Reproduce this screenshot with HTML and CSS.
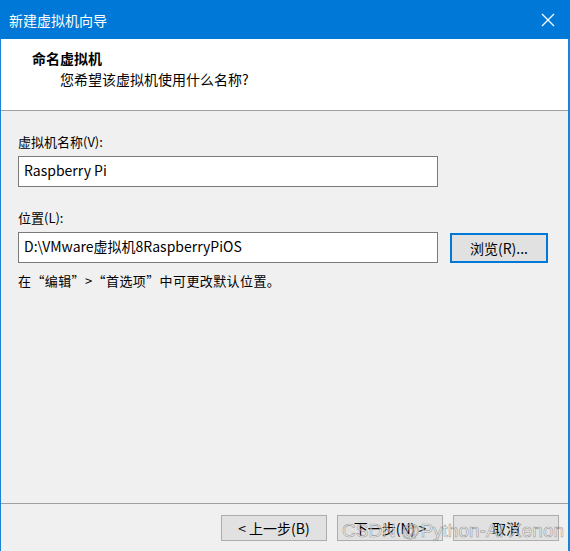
FILE: index.html
```html
<!DOCTYPE html>
<html lang="zh-CN">
<head>
<meta charset="utf-8">
<title>新建虚拟机向导</title>
<link rel="stylesheet" href="styles.css">
</head>
<body>
<div class="window">
  <div class="titlebar">
    <span class="title">新建虚拟机向导</span>
    <svg class="close" width="14" height="14" viewBox="0 0 14 14"><path d="M1 1L13 13M13 1L1 13" stroke="#fff" stroke-width="1.3" fill="none"/></svg>
  </div>
  <div class="header">
    <div class="h-title">命名虚拟机</div>
    <div class="h-sub">您希望该虚拟机使用什么名称?</div>
  </div>
  <div class="content">
    <div class="label first">虚拟机名称(V):</div>
    <div class="input">Raspberry Pi</div>
    <div class="label second">位置(L):</div>
    <div class="row">
      <div class="input">D:\VMware虚拟机8RaspberryPiOS</div>
      <div class="btn browse">浏览(R)...</div>
    </div>
    <div class="hint">在“编辑”&gt;“首选项”中可更改默认位置。</div>
  </div>
  <div class="footer">
    <div class="btn big">&lt; 上一步(B)</div>
    <div class="btn big">下一步(N) &gt;</div>
    <div class="btn big">取消</div>
    <div class="watermark">CSDN @Python-AI Xenon</div>
  </div>
</div>
</body>
</html>
```

FILE: styles.css
```css
html, body {
  margin: 0;
  padding: 0;
  background: #f0f0f0;
}
.window {
  width: 570px;
  height: 551px;
  box-sizing: border-box;
  border-left: 1px solid #1883d7;
  border-right: 2px solid #1883d7;
  background: #f0f0f0;
  display: flex;
  flex-direction: column;
  font-family: "Noto Sans CJK SC", "Microsoft YaHei", sans-serif;
  color: #000;
  position: relative;
}
.titlebar {
  height: 39px;
  margin: 0 -2px 0 -1px;
  background: #0078d7;
  display: flex;
  align-items: center;
  justify-content: space-between;
  padding: 0 15px 0 9px;
  flex-shrink: 0;
}
.title {
  color: #fff;
  font-size: 14px;
}
.close {
  display: block;
}
.header {
  height: 72px;
  background: #fff;
  border-bottom: 1px solid #a0a0a0;
  box-sizing: border-box;
  padding: 9px 0 0 31px;
  flex-shrink: 0;
}
.h-title {
  font-size: 14px;
  font-weight: bold;
  line-height: 20px;
}
.h-sub {
  font-size: 14px;
  line-height: 20px;
  padding-left: 28px;
  margin-top: 1px;
}
.content {
  padding: 0 0 0 17px;
  flex: 1;
  font-size: 13px;
}
.label {
  line-height: 18px;
}
.label.first {
  margin-top: 22px;
}
.label.second {
  margin-top: 22px;
}
.input {
  width: 420px;
  height: 31px;
  box-sizing: border-box;
  border: 1px solid #7a7a7a;
  background: #fff;
  margin-top: 5px;
  padding: 0 0 0 5px;
  font-size: 14px;
  line-height: 27px;
}
.row {
  display: flex;
  align-items: center;
  gap: 12px;
}
.btn {
  width: 106px;
  height: 26px;
  box-sizing: border-box;
  border: 1px solid #adadad;
  background: #e1e1e1;
  font-size: 13px;
  display: flex;
  align-items: center;
  justify-content: center;
}
.btn.big {
  font-size: 14px;
}
.browse {
  width: 98px;
  height: 30px;
  border: 2px solid #0078d7;
  margin-top: 6px;
  font-size: 14px;
}
.hint {
  margin-top: 9px;
  line-height: 18px;
  letter-spacing: 0.4px;
}
.footer {
  height: 48px;
  border-top: 1px solid #a0a0a0;
  box-sizing: border-box;
  display: flex;
  justify-content: flex-end;
  gap: 10px;
  padding: 11px 9px 0 0;
  flex-shrink: 0;
  position: relative;
}
.watermark {
  position: absolute;
  left: 341px;
  top: 16px;
  font-family: "Liberation Sans", Arial, sans-serif;
  font-size: 19px;
  color: rgba(255, 255, 255, 0.55);
  -webkit-text-stroke: 0.6px rgba(90, 90, 90, 0.6);
  white-space: nowrap;
  pointer-events: none;
}
```
